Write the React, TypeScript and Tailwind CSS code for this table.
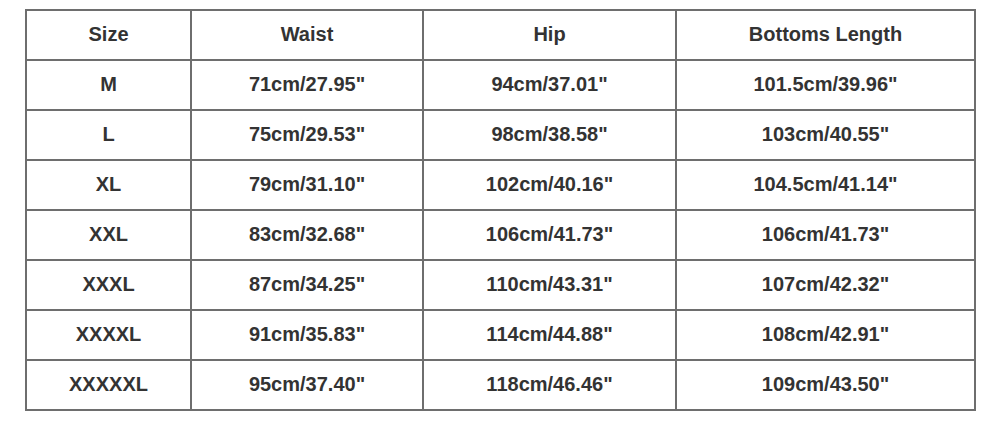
const headers = ['Size', 'Waist', 'Hip', 'Bottoms Length'];

const rows: string[][] = [
  ['M', '71cm/27.95"', '94cm/37.01"', '101.5cm/39.96"'],
  ['L', '75cm/29.53"', '98cm/38.58"', '103cm/40.55"'],
  ['XL', '79cm/31.10"', '102cm/40.16"', '104.5cm/41.14"'],
  ['XXL', '83cm/32.68"', '106cm/41.73"', '106cm/41.73"'],
  ['XXXL', '87cm/34.25"', '110cm/43.31"', '107cm/42.32"'],
  ['XXXXL', '91cm/35.83"', '114cm/44.88"', '108cm/42.91"'],
  ['XXXXXL', '95cm/37.40"', '118cm/46.46"', '109cm/43.50"'],
];

export default function App() {
  return (
    <div className="w-[1000px] h-[421px] bg-white pl-[25px] pt-[9px] font-['Liberation_Sans',Arial,sans-serif]">
      <table className="w-[949px] table-fixed border-collapse text-[20px] font-bold text-[#333333]">
        <colgroup>
          <col className="w-[165px]" />
          <col className="w-[232px]" />
          <col className="w-[253px]" />
          <col className="w-[299px]" />
        </colgroup>
        <thead>
          <tr className="h-[50px]">
            {headers.map((h) => (
              <th key={h} className="border-2 border-[#6e6e6e] p-0 pb-[2px] text-center font-bold">
                {h}
              </th>
            ))}
          </tr>
        </thead>
        <tbody>
          {rows.map((row) => (
            <tr key={row[0]} className="h-[50px]">
              {row.map((cell, i) => (
                <td key={i} className="border-2 border-[#6e6e6e] p-0 pb-[2px] text-center">
                  {cell}
                </td>
              ))}
            </tr>
          ))}
        </tbody>
      </table>
    </div>
  );
}
